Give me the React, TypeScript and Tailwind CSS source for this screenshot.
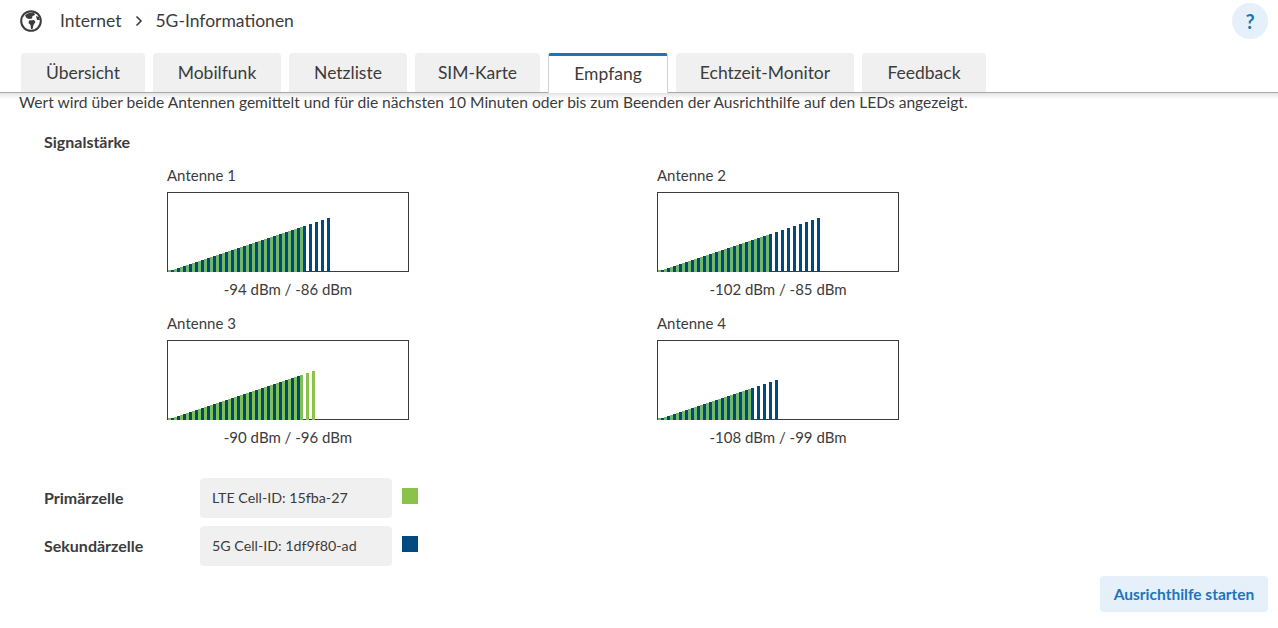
const FONT = "font-['Lato','Noto_Sans',sans-serif]";

const tabs = [
  { label: "Übersicht", width: "w-[124px]" },
  { label: "Mobilfunk", width: "w-[128px]" },
  { label: "Netzliste", width: "w-[118px]" },
  { label: "SIM-Karte", width: "w-[125px]" },
  { label: "Empfang", width: "w-[120px]", active: true },
  { label: "Echtzeit-Monitor", width: "w-[178px]" },
  { label: "Feedback", width: "w-[124px]" },
];

const antennas = [
  { name: "Antenne 1", blue: 27, green: 22, value: "-94 dBm / -86 dBm" },
  { name: "Antenne 2", blue: 27, green: 18, value: "-102 dBm / -85 dBm" },
  { name: "Antenne 3", blue: 22, green: 24, value: "-90 dBm / -96 dBm" },
  { name: "Antenne 4", blue: 20, green: 15, value: "-108 dBm / -99 dBm" },
];

function GlobeIcon() {
  return (
    <svg width="22" height="22" viewBox="0 0 22 22" className="shrink-0">
      <circle cx="11" cy="11" r="9.8" fill="white" stroke="#3c3c3c" strokeWidth="2" />
      <path d="M5 5.5 C7 3 11 2 14 2.5 L15 5 L12.5 6 L12 8.5 L9 9 L6.5 8 Z" fill="#3c3c3c" />
      <path d="M9 10.5 L14 10 L15.5 12 L13.5 15 L12.5 19 L11 19 L10.5 15 L8.5 13 Z" fill="#3c3c3c" />
      <path d="M16 6 L19 7 L20 10 L17 10 Z" fill="#3c3c3c" />
    </svg>
  );
}

function SignalChart({ blue, green }: { blue: number; green: number }) {
  const overlapBlue = green > blue ? "#004c68" : "#004a78";
  const overlapGreen = green > blue ? "#80bf58" : "#72b868";
  return (
    <svg width="242" height="80" viewBox="0 0 242 80" className="block">
      <rect x="0.5" y="0.5" width="241" height="79" fill="white" stroke="#3c3c3c" />
      <rect x="1" y="78" width="3" height="2" fill={overlapGreen} />
      {Array.from({ length: blue }).map((_, k) => (
        <rect key={k} x={4 + 6 * k} y={78 - 2 * k} width="3" height={2 + 2 * k} fill={k < green ? overlapBlue : "#004a80"} />
      ))}
      {Array.from({ length: green }).map((_, k) => (
        <rect key={k} x={7 + 6 * k} y={77 - 2 * k} width="3" height={3 + 2 * k} fill={k < blue ? overlapGreen : "#8bc34a"} />
      ))}
    </svg>
  );
}

export default function App() {
  return (
    <div className={`relative h-[628px] w-[1278px] overflow-hidden bg-white text-[#3c3c3c] ${FONT}`}>
      <div className="flex h-[42px] items-center pl-[20px] pr-[10px]">
        <GlobeIcon />
        <span className="ml-[18px] text-[17.5px]">Internet</span>
        <svg width="8" height="12" viewBox="0 0 8 12" className="ml-[14px]">
          <path d="M1.5 1.5 L6 6 L1.5 10.5" fill="none" stroke="#3c3c3c" strokeWidth="1.6" />
        </svg>
        <span className="ml-[12px] text-[17.5px]">5G-Informationen</span>
        <div className="ml-auto flex h-[36px] w-[36px] items-center justify-center rounded-full bg-[#e6f0fa] text-[20px] font-bold text-[#1c75bc]">?</div>
      </div>
      <div className="flex h-[51px] items-end gap-[8px] border-b border-[#a8a8a8] pl-[21px]">
        {tabs.map((t) =>
          t.active ? (
            <div key={t.label} className={`relative z-10 -mb-px flex h-[40px] ${t.width} items-center justify-center rounded-t-[3px] border-x border-[#d0d0d0] border-t-[3px] border-t-[#1c75bc] bg-white text-[17.5px]`}>
              {t.label}
            </div>
          ) : (
            <div key={t.label} className={`flex h-[39px] ${t.width} items-center justify-center rounded-t-[4px] bg-[#f0f0f0] pt-[2px] text-[17.5px]`}>
              {t.label}
            </div>
          )
        )}
      </div>
      <div className="h-[6px] bg-gradient-to-b from-[#e4e4e4] to-white" />
      <p className="-mt-[6px] pl-[19px] text-[15.6px] leading-[18px]">
        Wert wird über beide Antennen gemittelt und für die nächsten 10 Minuten oder bis zum Beenden der Ausrichthilfe auf den LEDs angezeigt.
      </p>
      <div className="mt-[21px] pl-[44px] text-[16px] font-bold leading-[20px]">Signalstärke</div>
      <div className="ml-[167px] mt-[13px] grid w-[732px] grid-cols-[242px_242px] justify-between gap-y-[14px]">
        {antennas.map((a) => (
          <div key={a.name}>
            <div className="mb-[7px] text-[15px] leading-[20px]">{a.name}</div>
            <SignalChart blue={a.blue} green={a.green} />
            <div className="mt-[7px] text-center text-[15px] leading-[20px]">{a.value}</div>
          </div>
        ))}
      </div>
      <div className="mt-[31px] flex flex-col gap-[8px] pl-[44px]">
        <div className="flex items-center">
          <div className="w-[156px] text-[16px] font-bold">Primärzelle</div>
          <div className="flex h-[40px] w-[192px] items-center rounded-[4px] bg-[#f0f0f0] pl-[12px] text-[14.25px]">LTE Cell-ID: 15fba-27</div>
          <div className="mb-[4px] ml-[10px] h-[16px] w-[16px] bg-[#8bc34a]" />
        </div>
        <div className="flex items-center">
          <div className="w-[156px] text-[16px] font-bold">Sekundärzelle</div>
          <div className="flex h-[40px] w-[192px] items-center rounded-[4px] bg-[#f0f0f0] pl-[12px] text-[14.25px]">5G Cell-ID: 1df9f80-ad</div>
          <div className="mb-[4px] ml-[10px] h-[16px] w-[16px] bg-[#004a80]" />
        </div>
      </div>
      <div className="absolute bottom-[16px] right-[10px] flex h-[36px] w-[168px] items-center justify-center rounded-[4px] bg-[#e6f0fa] pt-[2px] text-[15.5px] font-bold text-[#1c75bc]">
        Ausrichthilfe starten
      </div>
    </div>
  );
}
